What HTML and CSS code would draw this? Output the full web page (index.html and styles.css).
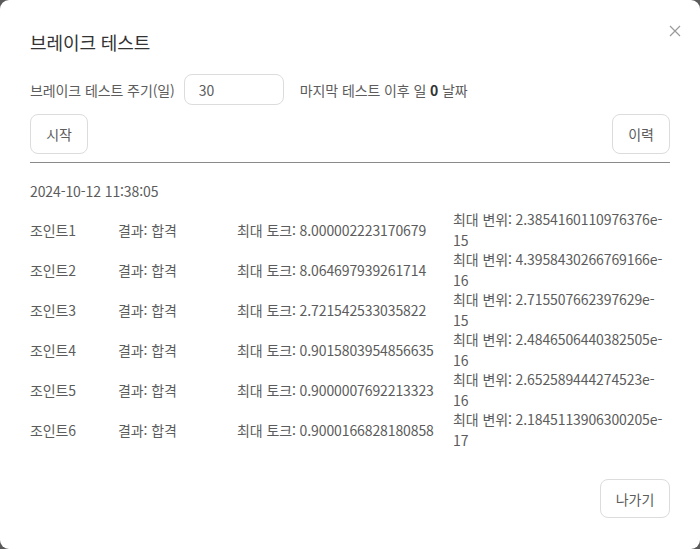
FILE: index.html
```html
<!DOCTYPE html>
<html lang="ko">
<head>
<meta charset="utf-8">
<title>브레이크 테스트</title>
<link rel="stylesheet" href="styles.css">
</head>
<body>
<div class="modal">
  <button class="close" aria-label="닫기">
    <svg width="12" height="12" viewBox="0 0 12 12"><path d="M1 1L11 11M11 1L1 11" stroke="#9a9a9a" stroke-width="1.2" fill="none"/></svg>
  </button>
  <h1 class="title">브레이크 테스트</h1>
  <div class="settings">
    <span class="label">브레이크 테스트 주기(일)</span>
    <input class="input" type="text" value="30">
    <span class="label since">마지막 테스트 이후 일 <b>0</b> 날짜</span>
  </div>
  <div class="actions">
    <button class="btn btn-start">시작</button>
    <button class="btn btn-history">이력</button>
  </div>
  <hr class="divider">
  <div class="date">2024-10-12 11:38:05</div>
  <div class="results">
    <div class="row"><span>조인트1</span><span>결과: 합격</span><span>최대 토크: 8.000002223170679</span><span class="disp">최대 변위: 2.3854160110976376e-15</span></div>
    <div class="row"><span>조인트2</span><span>결과: 합격</span><span>최대 토크: 8.064697939261714</span><span class="disp">최대 변위: 4.3958430266769166e-16</span></div>
    <div class="row"><span>조인트3</span><span>결과: 합격</span><span>최대 토크: 2.721542533035822</span><span class="disp">최대 변위: 2.715507662397629e-15</span></div>
    <div class="row"><span>조인트4</span><span>결과: 합격</span><span>최대 토크: 0.9015803954856635</span><span class="disp">최대 변위: 2.4846506440382505e-16</span></div>
    <div class="row"><span>조인트5</span><span>결과: 합격</span><span>최대 토크: 0.9000007692213323</span><span class="disp">최대 변위: 2.652589444274523e-16</span></div>
    <div class="row"><span>조인트6</span><span>결과: 합격</span><span>최대 토크: 0.9000166828180858</span><span class="disp">최대 변위: 2.1845113906300205e-17</span></div>
  </div>
  <div class="footer">
    <button class="btn btn-exit">나가기</button>
  </div>
</div>
</body>
</html>
```
FILE: styles.css
```css
html, body {
  margin: 0;
  padding: 0;
  background: #5a5a5a;
}
body {
  width: 700px;
  height: 549px;
  overflow: hidden;
  font-family: "Noto Sans CJK KR", "Noto Sans", sans-serif;
  color: #5c5c5c;
  font-size: 14px;
  letter-spacing: -0.1px;
}
.modal {
  position: relative;
  box-sizing: border-box;
  width: 700px;
  height: 549px;
  background: #fff;
  border-radius: 9px;
  padding: 28px 30px 0 30px;
}
.close {
  position: absolute;
  top: 25px;
  right: 19px;
  width: 12px;
  height: 12px;
  padding: 0;
  border: 0;
  background: none;
  display: flex;
}
.title {
  margin: 0;
  font-size: 18px;
  font-weight: 400;
  line-height: 28px;
  color: #333;
}
.settings {
  display: flex;
  align-items: center;
  margin-top: 18px;
  height: 31px;
}
.label {
  line-height: 20px;
}
.input {
  box-sizing: border-box;
  width: 100px;
  height: 31px;
  margin-left: 9px;
  border: 1px solid #dcdcdc;
  border-radius: 8px;
  padding: 0 14px;
  font-family: inherit;
  font-size: 14px;
  letter-spacing: -0.1px;
  color: #5c5c5c;
  outline: none;
}
.since {
  margin-left: 16px;
}
.since b {
  color: #333;
  font-weight: 700;
}
.actions {
  display: flex;
  justify-content: space-between;
  margin-top: 9px;
}
.btn {
  box-sizing: border-box;
  height: 40px;
  border: 1px solid #dcdcdc;
  border-radius: 8px;
  background: #fff;
  font-family: inherit;
  font-size: 14px;
  letter-spacing: -0.1px;
  color: #5c5c5c;
  padding: 0;
  white-space: nowrap;
}
.btn-start, .btn-history {
  width: 58px;
}
.divider {
  margin: 8px 0 0 0;
  border: 0;
  border-top: 1px solid #8a8a8a;
  height: 0;
}
.date {
  margin-top: 18px;
  line-height: 21px;
}
.results {
  margin-top: 7px;
}
.row {
  display: grid;
  grid-template-columns: 88px 119px 216px 212px;
  align-items: center;
  height: 40px;
}
.row span {
  line-height: 21px;
}
.footer {
  display: flex;
  justify-content: flex-end;
  margin-top: 30px;
}
.btn-exit {
  width: 70px;
  height: 39px;
}
```
